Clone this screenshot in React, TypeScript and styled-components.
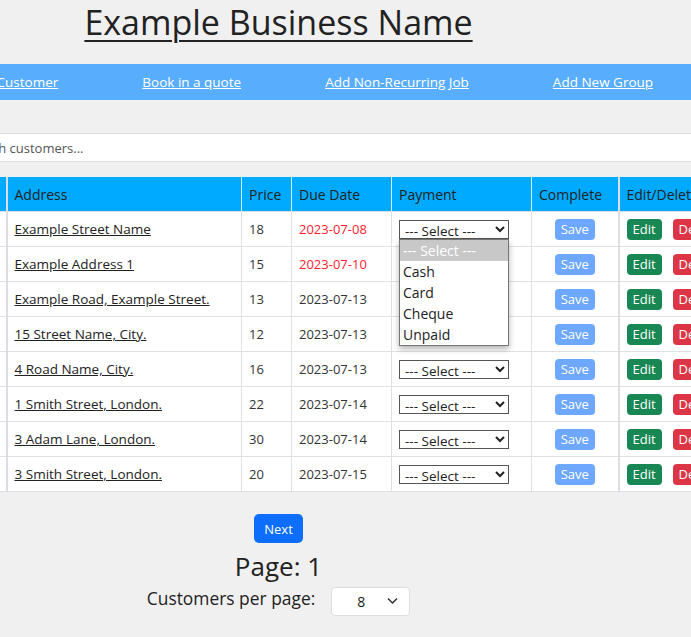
import styled, { createGlobalStyle } from "styled-components";

const Global = createGlobalStyle`
    html, body {
        margin: 0;
        padding: 0;
        background: #f0f0f0;
        overflow: hidden;
    }
    body {
        font-family: "Open Sans", "DejaVu Sans", sans-serif;
        color: #222;
    }
`;

const Page = styled.div`
    width: 100%;
    min-height: 637px;
    overflow: hidden;
    display: flex;
    flex-direction: column;
`;
const Column = styled.div`
    width: 557px;
    display: flex;
    flex-direction: column;
    align-items: center;
`;
const Title = styled.h1`
    margin: 0;
    font-size: 34px;
    line-height: 44px;
    font-weight: 500;
    text-decoration: underline;
    text-underline-offset: 5px;
    text-decoration-thickness: 2px;
    color: #222;
`;
const Nav = styled.nav`
    margin-top: 20px;
    height: 36px;
    background: #58adfc;
    display: flex;
    align-items: center;
    gap: 84px;
    margin-left: -32px;
    width: 900px;
`;
const NavLink = styled.a`
    color: #fff;
    font-size: 13.5px;
    text-decoration: underline;
    white-space: nowrap;
    cursor: pointer;
`;
const Search = styled.input`
    margin-top: 33px;
    margin-left: -43px;
    width: 900px;
    height: 29px;
    box-sizing: border-box;
    border: none;
    border-top: 1px solid #dcdde2;
    border-bottom: 1px solid #dcdde2;
    background: #fff;
    padding: 0 8px;
    font-family: inherit;
    font-size: 13px;
    outline: none;
    &::placeholder {
        color: #555;
    }
`;
const TableWrap = styled.div`
    margin-top: 15px;
    margin-left: -61px;
`;
const Table = styled.table`
    border-collapse: collapse;
    table-layout: fixed;
    width: 789px;
    background: #fff;
`;
const Th = styled.th<{ $thick?: boolean }>`
    background: #00aaff;
    height: 34px;
    padding: 0 7px;
    text-align: left;
    font-size: 14px;
    font-weight: 500;
    color: #222;
    border-right: 1px solid #d8eefc;
    border-left: ${(p) => (p.$thick ? "2px solid #dcdde2" : "none")};
    white-space: nowrap;
    overflow: hidden;
`;
const Td = styled.td<{ $center?: boolean; $thick?: boolean }>`
    height: 34px;
    padding: 0 7px;
    font-size: 13px;
    color: #333;
    border: 1px solid #dee0e4;
    border-left: ${(p) => (p.$thick ? "2px solid #dcdde2" : "1px solid #dee0e4")};
    text-align: ${(p) => (p.$center ? "center" : "left")};
    white-space: nowrap;
    overflow: visible;
`;
const Address = styled.a`
    color: #222;
    font-size: 13.5px;
    text-decoration: underline;
    cursor: pointer;
`;
const Due = styled.span<{ $late?: boolean }>`
    color: ${(p) => (p.$late ? "#ff1a2e" : "#333")};
`;
const SelectWrap = styled.div`
    position: relative;
    width: 110px;
`;
const PaySelect = styled.select`
    width: 110px;
    height: 19px;
    box-sizing: border-box;
    font-family: inherit;
    font-size: 13.5px;
    line-height: 17px;
    color: #222;
    background: #fff;
    border: 1px solid #555;
    border-radius: 0;
    padding: 0 1px;
    display: block;
`;
const Menu = styled.ul`
    position: absolute;
    top: 19px;
    left: 0;
    z-index: 5;
    width: 110px;
    box-sizing: border-box;
    margin: 0;
    padding: 0;
    list-style: none;
    background: #fff;
    border: 1px solid #767676;
    box-shadow: 0 3px 6px rgba(0, 0, 0, 0.3);
`;
const MenuItem = styled.li<{ $active?: boolean }>`
    height: 21px;
    line-height: 21px;
    padding-left: 3px;
    font-size: 14px;
    background: ${(p) => (p.$active ? "#c8c8c8" : "#fff")};
    color: ${(p) => (p.$active ? "#fff" : "#222")};
`;
const Btn = styled.button<{ $bg: string }>`
    height: 21px;
    padding: 0 6px;
    border: none;
    border-radius: 4px;
    background: ${(p) => p.$bg};
    color: #fff;
    font-family: inherit;
    font-size: 13px;
    line-height: 21px;
    cursor: pointer;
`;
const BtnRow = styled.div`
    display: flex;
    gap: 11px;
`;
const Pager = styled(Column)`
    margin-top: 22px;
`;
const NextBtn = styled.button`
    width: 49px;
    height: 29px;
    border: none;
    border-radius: 5px;
    background: #0d6efd;
    color: #fff;
    font-family: inherit;
    font-size: 13px;
    cursor: pointer;
`;
const PageLabel = styled.div`
    margin-top: 6px;
    font-size: 26px;
    line-height: 34px;
    color: #222;
`;
const PerPage = styled.div`
    margin-top: 4px;
    display: flex;
    align-items: center;
    gap: 16px;
`;
const PerLabel = styled.span`
    font-size: 17.4px;
    color: #222;
    margin-top: -8px;
`;
const PerBox = styled.div`
    position: relative;
    width: 79px;
    height: 29px;
`;
const PerSelect = styled.select`
    appearance: none;
    width: 79px;
    height: 29px;
    box-sizing: border-box;
    border: 1px solid #dcdde2;
    border-radius: 4px;
    background: #fff;
    padding-left: 25px;
    font-family: inherit;
    font-size: 14px;
    color: #222;
`;
const Chevron = styled.svg`
    position: absolute;
    right: 12px;
    top: 10px;
    pointer-events: none;
`;

const rows = [
    { address: "Example Street Name", price: 18, due: "2023-07-08", late: true },
    { address: "Example Address 1", price: 15, due: "2023-07-10", late: true },
    { address: "Example Road, Example Street.", price: 13, due: "2023-07-13" },
    { address: "15 Street Name, City.", price: 12, due: "2023-07-13" },
    { address: "4 Road Name, City.", price: 16, due: "2023-07-13" },
    { address: "1 Smith Street, London.", price: 22, due: "2023-07-14" },
    { address: "3 Adam Lane, London.", price: 30, due: "2023-07-14" },
    { address: "3 Smith Street, London.", price: 20, due: "2023-07-15" },
];
const options = ["Cash", "Card", "Cheque", "Unpaid"];

const App = () => {
    return (
        <Page>
            <Global />
            <Column>
                <Title>Example Business Name</Title>
            </Column>
            <Nav>
                <NavLink>Add Customer</NavLink>
                <NavLink>Book in a quote</NavLink>
                <NavLink>Add Non-Recurring Job</NavLink>
                <NavLink>Add New Group</NavLink>
            </Nav>
            <Search placeholder="Search customers..." />
            <TableWrap>
                <Table>
                    <colgroup>
                        <col style={{ width: 67 }} />
                        <col style={{ width: 235 }} />
                        <col style={{ width: 50 }} />
                        <col style={{ width: 100 }} />
                        <col style={{ width: 140 }} />
                        <col style={{ width: 87 }} />
                        <col style={{ width: 110 }} />
                    </colgroup>
                    <thead>
                        <tr>
                            <Th />
                            <Th $thick>Address</Th>
                            <Th>Price</Th>
                            <Th>Due Date</Th>
                            <Th>Payment</Th>
                            <Th>Complete</Th>
                            <Th $thick>Edit/Delete</Th>
                        </tr>
                    </thead>
                    <tbody>
                        {rows.map((r, i) => {
                            return (
                                <tr key={r.address}>
                                    <Td />
                                    <Td $thick>
                                        <Address>{r.address}</Address>
                                    </Td>
                                    <Td>{r.price}</Td>
                                    <Td>
                                        <Due $late={r.late}>{r.due}</Due>
                                    </Td>
                                    <Td>
                                        <SelectWrap>
                                            <PaySelect defaultValue="">
                                                <option value="">--- Select ---</option>
                                                {options.map((o) => (
                                                    <option key={o}>{o}</option>
                                                ))}
                                            </PaySelect>
                                            {i === 0 && (
                                                <Menu>
                                                    <MenuItem $active>--- Select ---</MenuItem>
                                                    {options.map((o) => (
                                                        <MenuItem key={o}>{o}</MenuItem>
                                                    ))}
                                                </Menu>
                                            )}
                                        </SelectWrap>
                                    </Td>
                                    <Td $center>
                                        <Btn $bg="#6ea8fe">Save</Btn>
                                    </Td>
                                    <Td $thick>
                                        <BtnRow>
                                            <Btn $bg="#198754">Edit</Btn>
                                            <Btn $bg="#dc3545">Delete</Btn>
                                        </BtnRow>
                                    </Td>
                                </tr>
                            );
                        })}
                    </tbody>
                </Table>
            </TableWrap>
            <Pager>
                <NextBtn>Next</NextBtn>
                <PageLabel>Page: 1</PageLabel>
                <PerPage>
                    <PerLabel>Customers per page:</PerLabel>
                    <PerBox>
                        <PerSelect defaultValue="8">
                            <option>5</option>
                            <option>8</option>
                            <option>10</option>
                        </PerSelect>
                        <Chevron width="11" height="8" viewBox="0 0 11 8">
                            <path d="M1 1.5l4.5 4.5 4.5-4.5" fill="none" stroke="#333" strokeWidth="1.5" />
                        </Chevron>
                    </PerBox>
                </PerPage>
            </Pager>
        </Page>
    );
};
export default App;
